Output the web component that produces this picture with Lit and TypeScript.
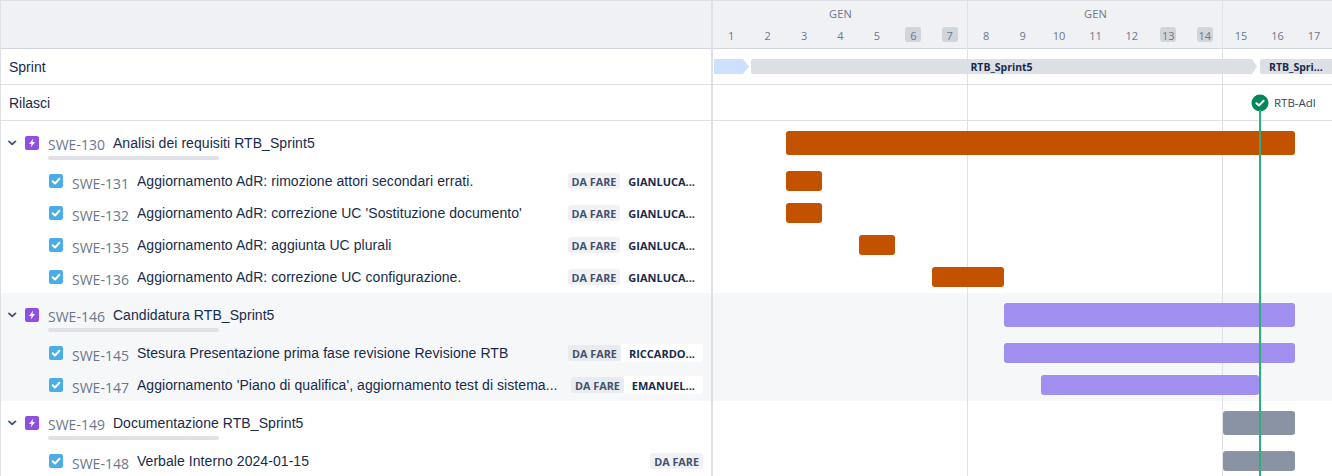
import { LitElement, html, css, svg } from "lit";
import { customElement } from "lit/decorators.js";

const DAY = 36.43;
const days = Array.from({ length: 17 }, (_, i) => i + 1);
const x = (d: number) => d * DAY;

type Row = { kind: "epic" | "task"; key: string; title: string; who?: string; status?: boolean; bar: [number, number]; color: string };
type Group = { shaded: boolean; rows: Row[] };

const O = "#c25100", P = "#a18ff0", G = "#8993a4";
const groups: Group[] = [
  { shaded: false, rows: [
    { kind: "epic", key: "SWE-130", title: "Analisi dei requisiti RTB_Sprint5", bar: [2, 16], color: O },
    { kind: "task", key: "SWE-131", title: "Aggiornamento AdR: rimozione attori secondari errati.", who: "GIANLUCA...", status: true, bar: [2, 3], color: O },
    { kind: "task", key: "SWE-132", title: "Aggiornamento AdR: correzione UC 'Sostituzione documento'", who: "GIANLUCA...", status: true, bar: [2, 3], color: O },
    { kind: "task", key: "SWE-135", title: "Aggiornamento AdR: aggiunta UC plurali", who: "GIANLUCA...", status: true, bar: [4, 5], color: O },
    { kind: "task", key: "SWE-136", title: "Aggiornamento AdR: correzione UC configurazione.", who: "GIANLUCA...", status: true, bar: [6, 8], color: O },
  ]},
  { shaded: true, rows: [
    { kind: "epic", key: "SWE-146", title: "Candidatura RTB_Sprint5", bar: [8, 16], color: P },
    { kind: "task", key: "SWE-145", title: "Stesura Presentazione prima fase revisione Revisione RTB", who: "RICCARDO...", status: true, bar: [8, 16], color: P },
    { kind: "task", key: "SWE-147", title: "Aggiornamento 'Piano di qualifica', aggiornamento test di sistema...", who: "EMANUEL...", status: true, bar: [9, 15], color: P },
  ]},
  { shaded: false, rows: [
    { kind: "epic", key: "SWE-149", title: "Documentazione RTB_Sprint5", bar: [14, 16], color: G },
    { kind: "task", key: "SWE-148", title: "Verbale Interno 2024-01-15", status: true, bar: [14, 16], color: G },
  ]},
];

const chevron = svg`<svg class="chev" width="10" height="10" viewBox="0 0 10 10"><path d="M1 3.4 4.2 6.4 7.4 3.4" fill="none" stroke="#42526e" stroke-width="1.8" stroke-linecap="round" stroke-linejoin="round"/></svg>`;
const epicIcon = svg`<svg class="ico" width="14" height="14" viewBox="0 0 14 14"><rect width="14" height="14" rx="2" fill="#904ee2"/><path d="M8.2 2.4 4 7.9h2.5L5.8 11.6 10 6.1H7.5z" fill="#fff"/></svg>`;
const taskIcon = svg`<svg class="ico" width="14" height="14" viewBox="0 0 14 14"><rect width="14" height="14" rx="2" fill="#4bade8"/><path d="M3.6 7.2 6 9.5 10.4 4.8" fill="none" stroke="#fff" stroke-width="2" stroke-linecap="round" stroke-linejoin="round"/></svg>`;

@customElement("app-root")
export class AppRoot extends LitElement {
  static styles = css`
    :host { display: block; width: 1332px; height: 476px; overflow: hidden; font-family: "Liberation Sans", Arial, sans-serif; color: #172b4d; background: #fff; }
    .wrap { display: grid; grid-template-columns: 712px 1fr; position: relative; height: 476px; overflow: hidden; border-top: 1px solid #dfe1e6; box-sizing: border-box; border-left: 1px solid #dfe1e6; }
    .left { border-right: 2px solid #dfe1e6; min-width: 0; box-sizing: border-box; position: relative; z-index: 4; }
    .right { position: relative; min-width: 0; overflow: hidden; }
    .head { height: 47px; background: #f0f1f4; border-bottom: 1px solid #d3d6dd; }
    .head.r { display: flex; flex-direction: column; }
    .months { display: grid; grid-template-columns: 255px 255px 1fr; height: 26px; flex: none; }
    .month { font: 11px "Open Sans", sans-serif; color: #6b778c; text-align: center; line-height: 25px; letter-spacing: .2px; }
    .days { display: grid; grid-template-columns: repeat(17, 36.43px); }
    .day { display: flex; justify-content: center; font: 11px/17px "Open Sans", sans-serif; color: #6b778c; }
    .day span { width: 16px; height: 15px; text-align: center; border-radius: 3px; }
    .day.we span { background: #d0d4db; }
    .label { height: 35px; border-bottom: 1px solid #dfe1e6; padding-left: 8px; font-size: 14px; line-height: 37px; color: #172b4d; }
    .tl { height: 35px; border-bottom: 1px solid #dfe1e6; display: flex; align-items: center; position: relative; }
    .seg { flex: none; height: 15px; display: flex; align-items: center; font: 700 10.5px "Open Sans", sans-serif; color: #172b4d; white-space: nowrap; position: relative; z-index: 2; box-sizing: border-box; }
    .s1 { width: 35px; margin-left: 1px; background: #cce0ff; clip-path: polygon(0 0, 29px 0, 100% 50%, 29px 100%, 0 100%); }
    .s2 { width: 506px; margin-left: 2px; background: #dcdfe4; border-radius: 2px 0 0 2px; clip-path: polygon(0 0, 501px 0, 100% 50%, 501px 100%, 0 100%); justify-content: center; padding-right: 5px; }
    .s3 { width: 72px; margin-left: 3px; background: #dcdfe4; border-radius: 2px 0 0 2px; padding-left: 9px; }
    .release { margin-left: 538px; display: flex; align-items: center; gap: 5px; font: 11.5px "Open Sans", sans-serif; color: #344563; position: relative; z-index: 3; }
    .rel-ico { display: block; }
    .row { box-sizing: border-box; display: flex; align-items: center; }
    .row.epic { height: 44px; }
    .row.task { height: 32px; }
    .row.shaded { background: #f6f7f9; }
    .row.epic.l { padding: 0 0 0 7px; align-items: flex-start; }
    .row.task.l { padding-left: 48px; }
    .chev { margin-top: 17px; margin-right: 7px; flex: none; }
    .row.epic .ico { margin-top: 15px; flex: none; }
    .row.task .ico { flex: none; }
    .keybox { margin-left: 9px; flex: none; position: relative; }
    .key { font: 14px "Open Sans", sans-serif; color: #6b778c; white-space: nowrap; line-height: 19px; display: block; }
    .row.epic .key { margin-top: 14px; }
    .row.task .key { margin-top: 4px; }
    .prog { position: absolute; left: 0; top: 35px; width: 171px; height: 4px; border-radius: 2px; background: #dfe1e6; }
    .title { font-size: 14px; line-height: 18px; letter-spacing: .065px; margin-left: 8px; white-space: nowrap; overflow: hidden; text-overflow: ellipsis; flex: 1 1 auto; min-width: 0; color: #172b4d; }
    .row.epic .title { margin-top: 13px; }
    .lozenge { flex: none; height: 16px; padding: 0 4px; border-radius: 3px; background: #f0f1f4; color: #42526e; font: 700 10.8px/18px "Open Sans", sans-serif; white-space: nowrap; }
    .row.shaded .lozenge { background: #e9ebef; }
    .who { flex: none; height: 18px; padding: 0 8px; font: 700 11px/20px "Open Sans", sans-serif; color: #172b4d; white-space: nowrap; border-radius: 3px; }
    .row.shaded .who { background: #fff; }
    .row.l { padding-right: 8px; }
    .bar { height: 24px; border-radius: 3px; position: relative; z-index: 2; }
    .row.task .bar { height: 20px; }
    .vline { position: absolute; top: 0; bottom: 0; width: 1px; background: #dfe1e6; z-index: 1; }
    .rows { position: relative; }
    .today { position: absolute; left: 546px; top: 109px; bottom: 0; width: 2px; background: #2fae7b; z-index: 3; }
  `;

  render() {
    const all = groups.flatMap((g) => g.rows.map((r) => ({ ...r, shaded: g.shaded })));
    return html`<div class="wrap">
      <div class="left">
        <div class="head"></div>
        <div class="label">Sprint</div>
        <div class="label">Rilasci</div>
        ${all.map((r) => r.kind === "epic"
          ? html`<div class="row epic l ${r.shaded ? "shaded" : ""}">${chevron}${epicIcon}
              <div class="keybox"><span class="key">${r.key}</span><span class="prog"></span></div>
              <div class="title">${r.title}</div></div>`
          : html`<div class="row task l ${r.shaded ? "shaded" : ""}">${taskIcon}
              <div class="keybox"><span class="key">${r.key}</span></div>
              <div class="title">${r.title}</div>
              <span class="lozenge">DA FARE</span>
              ${r.who ? html`<span class="who">${r.who}</span>` : ""}</div>`)}
      </div>
      <div class="right">
        <div class="head r">
          <div class="months"><div class="month">GEN</div><div class="month">GEN</div></div>
          <div class="days">${days.map((d) => html`<div class="day ${d === 6 || d === 7 || d === 13 || d === 14 ? "we" : ""}"><span>${d}</span></div>`)}</div>
        </div>
        <div class="tl">
          <div class="seg s1"></div>
          <div class="seg s2">RTB_Sprint5</div>
          <div class="seg s3">RTB_Spri...</div>
        </div>
        <div class="tl">
          <div class="release">
            <svg class="rel-ico" width="18" height="18" viewBox="0 0 18 18"><circle cx="9" cy="9" r="8.5" fill="#00875a"/><path d="M5.4 9.2 7.9 11.5 12.6 6.8" fill="none" stroke="#fff" stroke-width="2" stroke-linecap="round" stroke-linejoin="round"/></svg>
            <span>RTB-Adl</span>
          </div>
        </div>
        <div class="rows">
          ${all.map((r) => html`<div class="row ${r.kind} ${r.shaded ? "shaded" : ""}">
            <div class="bar" style="margin-left:${x(r.bar[0])}px;width:${x(r.bar[1]) - x(r.bar[0]) - 0.6}px;background:${r.color}"></div>
          </div>`)}
        </div>
        <div class="vline" style="left:${x(7) - 1}px"></div>
        <div class="vline" style="left:${x(14) - 1}px"></div>
        <div class="today"></div>
      </div>
    </div>`;
  }
}
